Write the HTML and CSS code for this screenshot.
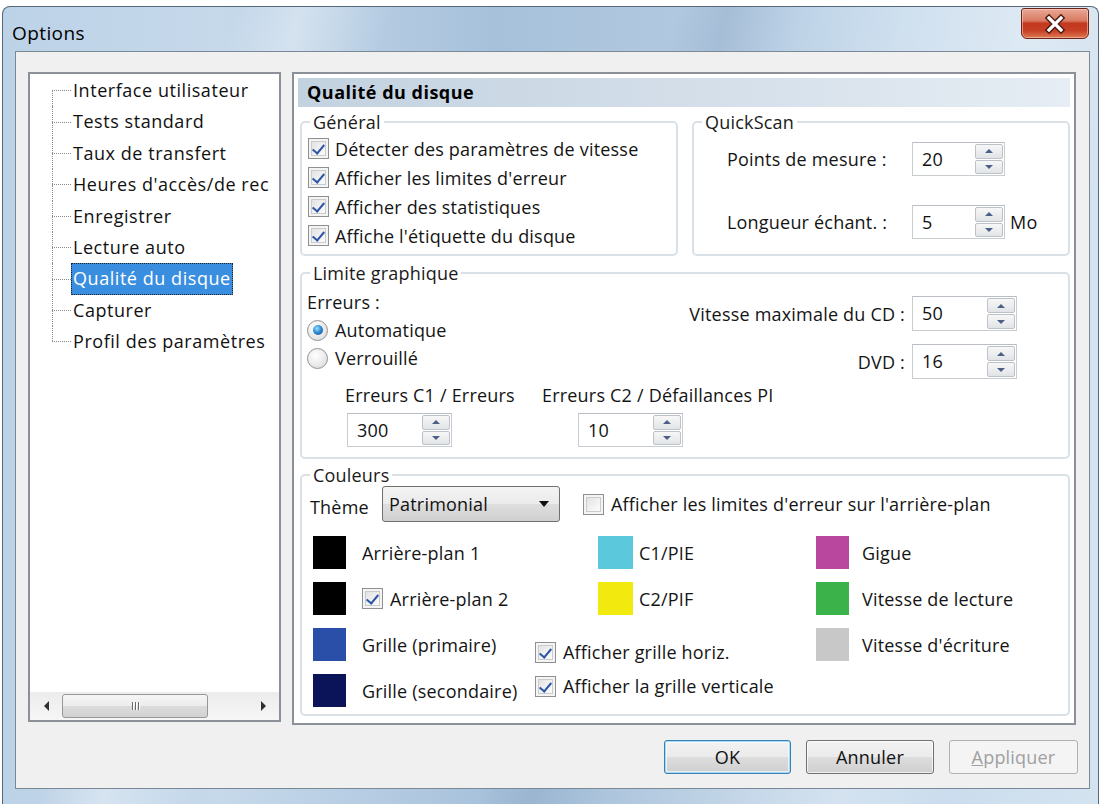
FILE: index.html
```html
<!DOCTYPE html>
<html lang="fr">
<head>
<meta charset="utf-8">
<title>Options</title>
<link rel="stylesheet" href="styles.css">
</head>
<body>
<div class="window">
  <div class="titlebar">
    <div class="title">Options</div>
    <div class="close-btn">
      <svg width="24" height="20" viewBox="0 0 24 20"><path d="M6 4 L18 16 M18 4 L6 16" stroke="#4a1a10" stroke-width="6" stroke-linecap="square"/><path d="M6 4 L18 16 M18 4 L6 16" stroke="#ffffff" stroke-width="3.2" stroke-linecap="square"/></svg>
    </div>
  </div>
  <div class="client">
    <div class="main">
      <div class="tree">
        <ul class="tree-list">
          <li class="first"><span class="conn"><span class="up"></span><span class="mid"></span><span class="down"></span></span><span class="node">Interface utilisateur</span></li>
          <li><span class="conn"><span class="up"></span><span class="mid"></span><span class="down"></span></span><span class="node">Tests standard</span></li>
          <li><span class="conn"><span class="up"></span><span class="mid"></span><span class="down"></span></span><span class="node">Taux de transfert</span></li>
          <li><span class="conn"><span class="up"></span><span class="mid"></span><span class="down"></span></span><span class="node">Heures d'accès/de rec</span></li>
          <li><span class="conn"><span class="up"></span><span class="mid"></span><span class="down"></span></span><span class="node">Enregistrer</span></li>
          <li><span class="conn"><span class="up"></span><span class="mid"></span><span class="down"></span></span><span class="node">Lecture auto</span></li>
          <li><span class="conn"><span class="up"></span><span class="mid"></span><span class="down"></span></span><span class="node selected">Qualité du disque</span></li>
          <li><span class="conn"><span class="up"></span><span class="mid"></span><span class="down"></span></span><span class="node">Capturer</span></li>
          <li class="last"><span class="conn"><span class="up"></span><span class="mid"></span><span class="down"></span></span><span class="node">Profil des paramètres</span></li>
        </ul>
        <div class="hscroll">
          <span class="sbtn"><span class="tri-left"></span></span>
          <span class="thumb"><span class="grip"></span><span class="grip"></span><span class="grip"></span></span>
          <span class="track"></span>
          <span class="sbtn"><span class="tri-right"></span></span>
        </div>
      </div>

      <div class="panel">
        <div class="panel-header">Qualité du disque</div>

        <div class="row1">
          <fieldset class="grp">
            <legend>Général</legend>
            <div class="general-body">
              <div class="chk-row"><span class="chk on"></span><span>Détecter des paramètres de vitesse</span></div>
              <div class="chk-row"><span class="chk on"></span><span>Afficher les limites d'erreur</span></div>
              <div class="chk-row"><span class="chk on"></span><span>Afficher des statistiques</span></div>
              <div class="chk-row"><span class="chk on"></span><span>Affiche l'étiquette du disque</span></div>
            </div>
          </fieldset>
          <fieldset class="grp">
            <legend>QuickScan</legend>
            <div class="quick-body">
              <div class="q-row">
                <span class="q-lbl">Points de mesure :</span>
                <div class="spin w93"><span class="val">20</span><span class="spin-btns"><span class="sb"><span class="tri-up"></span></span><span class="sb"><span class="tri-down"></span></span></span></div>
              </div>
              <div class="q-row">
                <span class="q-lbl">Longueur échant. :</span>
                <div class="spin w93"><span class="val">5</span><span class="spin-btns"><span class="sb"><span class="tri-up"></span></span><span class="sb"><span class="tri-down"></span></span></span></div>
                <span class="unit">Mo</span>
              </div>
            </div>
          </fieldset>
        </div>

        <fieldset class="grp limite">
          <legend>Limite graphique</legend>
          <div class="limite-body">
            <div class="lim-left">
              <div class="lbl-line">Erreurs :</div>
              <div class="radio-row first-radio"><span class="radio on"></span><span>Automatique</span></div>
              <div class="radio-row"><span class="radio"></span><span>Verrouillé</span></div>
            </div>
            <div class="speed-grid">
              <span class="sp-lbl">Vitesse maximale du CD :</span>
              <div class="spin w105 tall"><span class="val">50</span><span class="spin-btns"><span class="sb"><span class="tri-up"></span></span><span class="sb"><span class="tri-down"></span></span></span></div>
              <span class="sp-lbl">DVD :</span>
              <div class="spin w105 tall"><span class="val">16</span><span class="spin-btns"><span class="sb"><span class="tri-up"></span></span><span class="sb"><span class="tri-down"></span></span></span></div>
            </div>
            <div class="c-row">
              <div class="c-col c1">
                <div class="lbl-line">Erreurs C1 / Erreurs</div>
                <div class="spin w105 c1spin"><span class="val">300</span><span class="spin-btns"><span class="sb"><span class="tri-up"></span></span><span class="sb"><span class="tri-down"></span></span></span></div>
              </div>
              <div class="c-col c2">
                <div class="lbl-line">Erreurs C2 / Défaillances PI</div>
                <div class="spin w105 c2spin"><span class="val">10</span><span class="spin-btns"><span class="sb"><span class="tri-up"></span></span><span class="sb"><span class="tri-down"></span></span></span></div>
              </div>
            </div>
          </div>
        </fieldset>

        <fieldset class="grp couleurs">
          <legend>Couleurs</legend>
          <div class="couleurs-body">
            <div class="theme-row">
              <span class="theme-lbl">Thème</span>
              <div class="combo"><span class="combo-val">Patrimonial</span><span class="combo-arrow"></span></div>
              <span class="chk theme-chk"></span>
              <span>Afficher les limites d'erreur sur l'arrière-plan</span>
            </div>
            <div class="swatch-grid">
              <div class="cell a"><span class="sw" style="background:#000000"></span><span>Arrière-plan 1</span></div>
              <div class="cell b"><span class="sw" style="background:#5bc8dc"></span><span>C1/PIE</span></div>
              <div class="cell c"><span class="sw" style="background:#b8479d"></span><span>Gigue</span></div>

              <div class="cell a"><span class="sw" style="background:#000000"></span><span class="chk on a-chk"></span><span>Arrière-plan 2</span></div>
              <div class="cell b"><span class="sw" style="background:#f2ea0f"></span><span>C2/PIF</span></div>
              <div class="cell c"><span class="sw" style="background:#3bb34a"></span><span>Vitesse de lecture</span></div>

              <div class="cell a"><span class="sw" style="background:#2a4fa8"></span><span>Grille (primaire)</span></div>
              <div class="cell bspan">
                <div class="chk-row2"><span class="chk on"></span><span>Afficher grille horiz.</span></div>
                <div class="chk-row2"><span class="chk on"></span><span>Afficher la grille verticale</span></div>
              </div>
              <div class="cell c"><span class="sw" style="background:#c8c8c8"></span><span>Vitesse d'écriture</span></div>

              <div class="cell a"><span class="sw" style="background:#0b1458"></span><span>Grille (secondaire)</span></div>
            </div>
          </div>
        </fieldset>
      </div>
    </div>

    <div class="buttons">
      <div class="btn default">OK</div>
      <div class="btn">Annuler</div>
      <div class="btn disabled"><u>A</u>ppliquer</div>
    </div>
  </div>
</div>
</body>
</html>
```
FILE: styles.css
```css
* { box-sizing: border-box; }

html, body {
  margin: 0;
  padding: 0;
  background: #ffffff;
}

body {
  font-family: "Open Sans", "Noto Sans", sans-serif;
  font-size: 18px;
  letter-spacing: 0.2px;
  color: #141414;
  width: 1101px;
  height: 804px;
  overflow: hidden;
  white-space: nowrap;
}

/* ---------- window frame ---------- */
.window {
  margin: 6px 2px 0 2px;
  height: 798px;
  border: 1px solid #56687a;
  border-bottom: none;
  border-radius: 8px 8px 0 0;
  display: flex;
  flex-direction: column;
  background:
    linear-gradient(104deg, rgba(255,255,255,0) 0%, rgba(255,255,255,0) 18%, rgba(255,255,255,0.35) 23%, rgba(255,255,255,0) 30%, rgba(255,255,255,0) 52%, rgba(90,120,160,0.18) 56%, rgba(255,255,255,0) 62%, rgba(255,255,255,0.3) 80%, rgba(255,255,255,0) 88%),
    linear-gradient(to right, #bcd2e7 0%, #c6d9eb 20%, #a7c1db 45%, #b0c8df 60%, #c8dbed 82%, #d4e3f0 100%);
}

.titlebar {
  height: 44px;
  flex: none;
  display: flex;
  justify-content: space-between;
  align-items: flex-start;
  padding: 0 9px 0 9px;
}

.title {
  margin-top: 14px;
  font-size: 19px;
  letter-spacing: 0.4px;
  line-height: 24px;
  color: #000;
}

.close-btn {
  width: 68px;
  height: 31px;
  margin-top: 1px;
  border: 1px solid #6b2418;
  border-radius: 3px 3px 6px 6px;
  background: linear-gradient(to bottom, #e9a896 0%, #d97b62 40%, #c2381f 50%, #c74026 75%, #de7a52 100%);
  box-shadow: inset 0 0 0 1px rgba(255,220,210,0.5);
  display: flex;
  align-items: center;
  justify-content: center;
}

/* ---------- client area ---------- */
.client {
  flex: 1;
  margin: 0 8px 15px 12px;
  border: 1px solid #7b8896;
  background: #f0f0f0;
  padding: 20px 12px 14px 12px;
  display: flex;
  flex-direction: column;
}

.main {
  display: flex;
  gap: 11px;
  height: 653px;
  flex: none;
}

/* ---------- tree ---------- */
.tree {
  width: 253px;
  height: 650px;
  border: 2px solid #8c9199;
  background: #ffffff;
  display: flex;
  flex-direction: column;
  overflow: hidden;
}

.tree-list {
  list-style: none;
  margin: 0;
  padding: 1px 0 0 22px;
  flex: 1;
  overflow: hidden;
}

.tree-list li {
  display: flex;
  align-items: stretch;
  height: 31.4px;
}

.conn {
  width: 19px;
  flex: none;
  display: flex;
  flex-direction: column;
  margin-right: 0;
}
.conn .up, .conn .down {
  flex: 1;
  border-left: 1px dotted #8a8a8a;
}
.conn .mid {
  height: 0;
  border-top: 1px dotted #8a8a8a;
}
.tree-list li.first .conn .up { border-left-color: transparent; }
.tree-list li.last .conn .down { border-left-color: transparent; }

.node {
  line-height: 30px;
  padding: 0 2px;
  font-size: 18px;
  letter-spacing: 0.55px;
  color: #111;
}
.node.selected {
  background: #3a8ee0;
  color: #ffffff;
  outline: 1px dotted #1f1f1f;
  outline-offset: -1px;
}

.hscroll {
  height: 28px;
  flex: none;
  display: flex;
  align-items: stretch;
  background: linear-gradient(to bottom, #ececec, #f6f6f6);
  padding: 2px 0;
}
.sbtn {
  width: 32px;
  flex: none;
  display: flex;
  align-items: center;
  justify-content: center;
}
.tri-left {
  width: 0; height: 0;
  border-top: 5px solid transparent;
  border-bottom: 5px solid transparent;
  border-right: 5px solid #303030;
}
.tri-right {
  width: 0; height: 0;
  border-top: 5px solid transparent;
  border-bottom: 5px solid transparent;
  border-left: 5px solid #303030;
}
.thumb {
  width: 146px;
  flex: none;
  border: 1px solid #979797;
  border-radius: 3px;
  background: linear-gradient(to bottom, #f6f6f6 0%, #ececec 50%, #dcdcdc 51%, #d2d2d2 100%);
  display: flex;
  align-items: center;
  justify-content: center;
  gap: 2px;
}
.grip {
  width: 1px;
  height: 8px;
  background: #6a6a6a;
  box-shadow: 1px 0 0 #ffffff;
}
.track { flex: 1; }

/* ---------- right panel ---------- */
.panel {
  width: 784px;
  height: 653px;
  border: 2px solid #8c9199;
  background: #ffffff;
  padding: 4px 4px 0 4px;
  display: flex;
  flex-direction: column;
}

.panel-header {
  height: 29px;
  flex: none;
  font-weight: bold;
  font-size: 18px;
  letter-spacing: 0.5px;
  line-height: 29px;
  padding-left: 9px;
  color: #000;
  background: linear-gradient(to right, #c3d2e0 0%, #d3dee9 50%, #e6edf4 100%);
}

.grp {
  margin: 0 0 0 2px;
  padding: 0;
  border: 2px solid #d9e1e7;
  border-radius: 5px;
  min-width: 0;
}
.grp legend {
  margin-left: 8px;
  padding: 0 3px;
  line-height: 22px;
  font-size: 18px;
  color: #1a1a1a;
}

.row1 {
  display: flex;
  gap: 14px;
  height: 145px;
  margin: 4px 0 0 2px;
  flex: none;
}
.row1 .grp {
  flex: 1;
  margin: 0;
}

.general-body {
  padding: 1px 0 0 6px;
}
.chk-row {
  height: 29px;
  display: flex;
  align-items: center;
  gap: 6px;
}

.chk {
  width: 21px;
  height: 21px;
  flex: none;
  border: 1px solid #8e8f8f;
  background: linear-gradient(135deg, #dcdcdc 0%, #f4f4f4 60%, #ffffff 100%);
  box-shadow: inset 0 0 0 2px #f4f4f4, inset 0 0 0 3px #c9cccf;
  position: relative;
}
.chk.on::after {
  content: "";
  position: absolute;
  left: 6px;
  top: 3px;
  width: 5px;
  height: 10px;
  border-right: 2px solid #2b55a8;
  border-bottom: 2px solid #2b55a8;
  transform: rotate(40deg);
}

.quick-body {
  padding: 9px 0 0 33px;
  display: flex;
  flex-direction: column;
  gap: 29px;
}
.q-row {
  display: flex;
  align-items: center;
}
.q-lbl {
  width: 185px;
  flex: none;
}
.unit { margin-left: 5px; }

/* spin control */
.spin {
  display: flex;
  height: 34px;
  border: 1px solid #c7ccd1;
  border-top-color: #b9bec4;
  background: #ffffff;
  flex: none;
}
.spin.w93 { width: 93px; }
.spin.w105 { width: 105px; }
.spin.tall { height: 35px; }
.spin .val {
  flex: 1;
  padding-left: 9px;
  line-height: 32px;
  color: #111;
}
.spin-btns {
  width: 29px;
  flex: none;
  display: flex;
  flex-direction: column;
  padding: 1px 1px 1px 0;
  gap: 1px;
}
.sb {
  flex: 1;
  border: 1px solid #bcc2c8;
  border-radius: 2px;
  background: linear-gradient(to bottom, #f7f7f7, #e1e4e7);
  display: flex;
  align-items: center;
  justify-content: center;
}
.tri-up {
  width: 0; height: 0;
  border-left: 4px solid transparent;
  border-right: 4px solid transparent;
  border-bottom: 4px solid #4b6088;
}
.tri-down {
  width: 0; height: 0;
  border-left: 4px solid transparent;
  border-right: 4px solid transparent;
  border-top: 4px solid #4b6088;
}

/* limite graphique */
.limite {
  height: 197px;
  margin-top: 6px;
  flex: none;
}
.limite-body {
  display: grid;
  grid-template-columns: 1fr auto;
  align-items: start;
  padding: 7px 51px 0 5px;
}
.lbl-line {
  line-height: 22px;
  height: 22px;
}
.radio-row {
  height: 28px;
  display: flex;
  align-items: center;
  gap: 7px;
}
.first-radio { margin-top: 3px; }
.radio {
  width: 21px;
  height: 21px;
  flex: none;
  border-radius: 50%;
  border: 1px solid #8f9194;
  background: radial-gradient(circle at 40% 35%, #ffffff 0%, #eaeaea 55%, #d4d4d4 100%);
  display: flex;
  align-items: center;
  justify-content: center;
}
.radio.on::after {
  content: "";
  width: 10px;
  height: 10px;
  border-radius: 50%;
  background: radial-gradient(circle at 40% 35%, #9fe0ff 0%, #2f8ed6 45%, #0d3f78 100%);
}
.speed-grid {
  margin-top: 5px;
  display: grid;
  grid-template-columns: auto 105px;
  grid-auto-rows: 35px;
  row-gap: 13px;
  column-gap: 7px;
  align-items: center;
}
.sp-lbl { text-align: right; }

.c-row {
  grid-column: 1 / span 2;
  display: flex;
  margin: 5px 0 0 38px;
}
.c-col.c1 { width: 197px; flex: none; }
.spin.c1spin { margin: 7px 0 0 2px; }
.spin.c2spin { margin: 7px 0 0 36px; }

/* couleurs */
.couleurs {
  height: 252px;
  margin-top: 5px;
  flex: none;
}
.couleurs-body {
  padding: 0 0 0 8px;
}
.theme-row {
  height: 36px;
  display: flex;
  align-items: center;
}
.theme-lbl { width: 72px; flex: none; padding-top: 6px; }
.combo {
  width: 178px;
  height: 36px;
  flex: none;
  border: 1px solid #707070;
  border-radius: 3px;
  background: linear-gradient(to bottom, #f3f3f3 0%, #ebebeb 50%, #dedede 51%, #d0d0d0 100%);
  display: flex;
  align-items: center;
  justify-content: space-between;
  padding: 0 10px 0 4px;
}
.combo-val {
  line-height: 26px;
  padding: 0 2px;
  color: #111;
}
.combo-arrow {
  width: 0; height: 0;
  border-left: 5px solid transparent;
  border-right: 5px solid transparent;
  border-top: 6px solid #111;
}
.theme-chk { margin: 0 7px 0 23px; }

.swatch-grid {
  margin-top: 14px;
  padding-left: 3px;
  display: grid;
  grid-template-columns: 222px 281px 1fr;
  grid-template-rows: 33px 33px 33px 33px;
  row-gap: 13px;
}
.cell {
  display: flex;
  align-items: center;
}
.sw {
  width: 33px;
  height: 33px;
  flex: none;
}
.cell.a .sw { margin-right: 16px; }
.cell.a .a-chk { margin-right: 7px; }
.cell.a { grid-column: 1; }
.cell.b { grid-column: 2; padding-left: 63px; }
.cell.b .sw { margin-right: 6px; width: 35px; }
.cell.c { grid-column: 3; }
.cell.c .sw { margin-right: 13px; }
.cell.bspan {
  grid-column: 2;
  grid-row: 3 / span 2;
  flex-direction: column;
  align-items: flex-start;
  padding-top: 13px;
  gap: 12px;
}
.chk-row2 {
  height: 22px;
  display: flex;
  align-items: center;
  gap: 7px;
}

/* ---------- buttons ---------- */
.buttons {
  margin-top: 15px;
  display: flex;
  justify-content: flex-end;
  gap: 15px;
  margin-right: -1px;
}
.btn {
  width: 128px;
  height: 34px;
  border: 1px solid #707070;
  border-radius: 3px;
  background: linear-gradient(to bottom, #f2f2f2 0%, #ebebeb 50%, #dddddd 51%, #cfcfcf 100%);
  box-shadow: inset 0 0 0 1px rgba(255,255,255,0.7);
  display: flex;
  align-items: center;
  justify-content: center;
  color: #111;
}
.btn.default {
  width: 127px;
  border-color: #3c7fb1;
  box-shadow: inset 0 0 0 1px #9fdcf7, inset 0 0 0 2px rgba(255,255,255,0.6);
}
.btn.disabled {
  width: 129px;
  border-color: #adb2b5;
  background: #f4f4f4;
  box-shadow: none;
  color: #a0a0a0;
}
.btn u { text-decoration: underline; }
```
